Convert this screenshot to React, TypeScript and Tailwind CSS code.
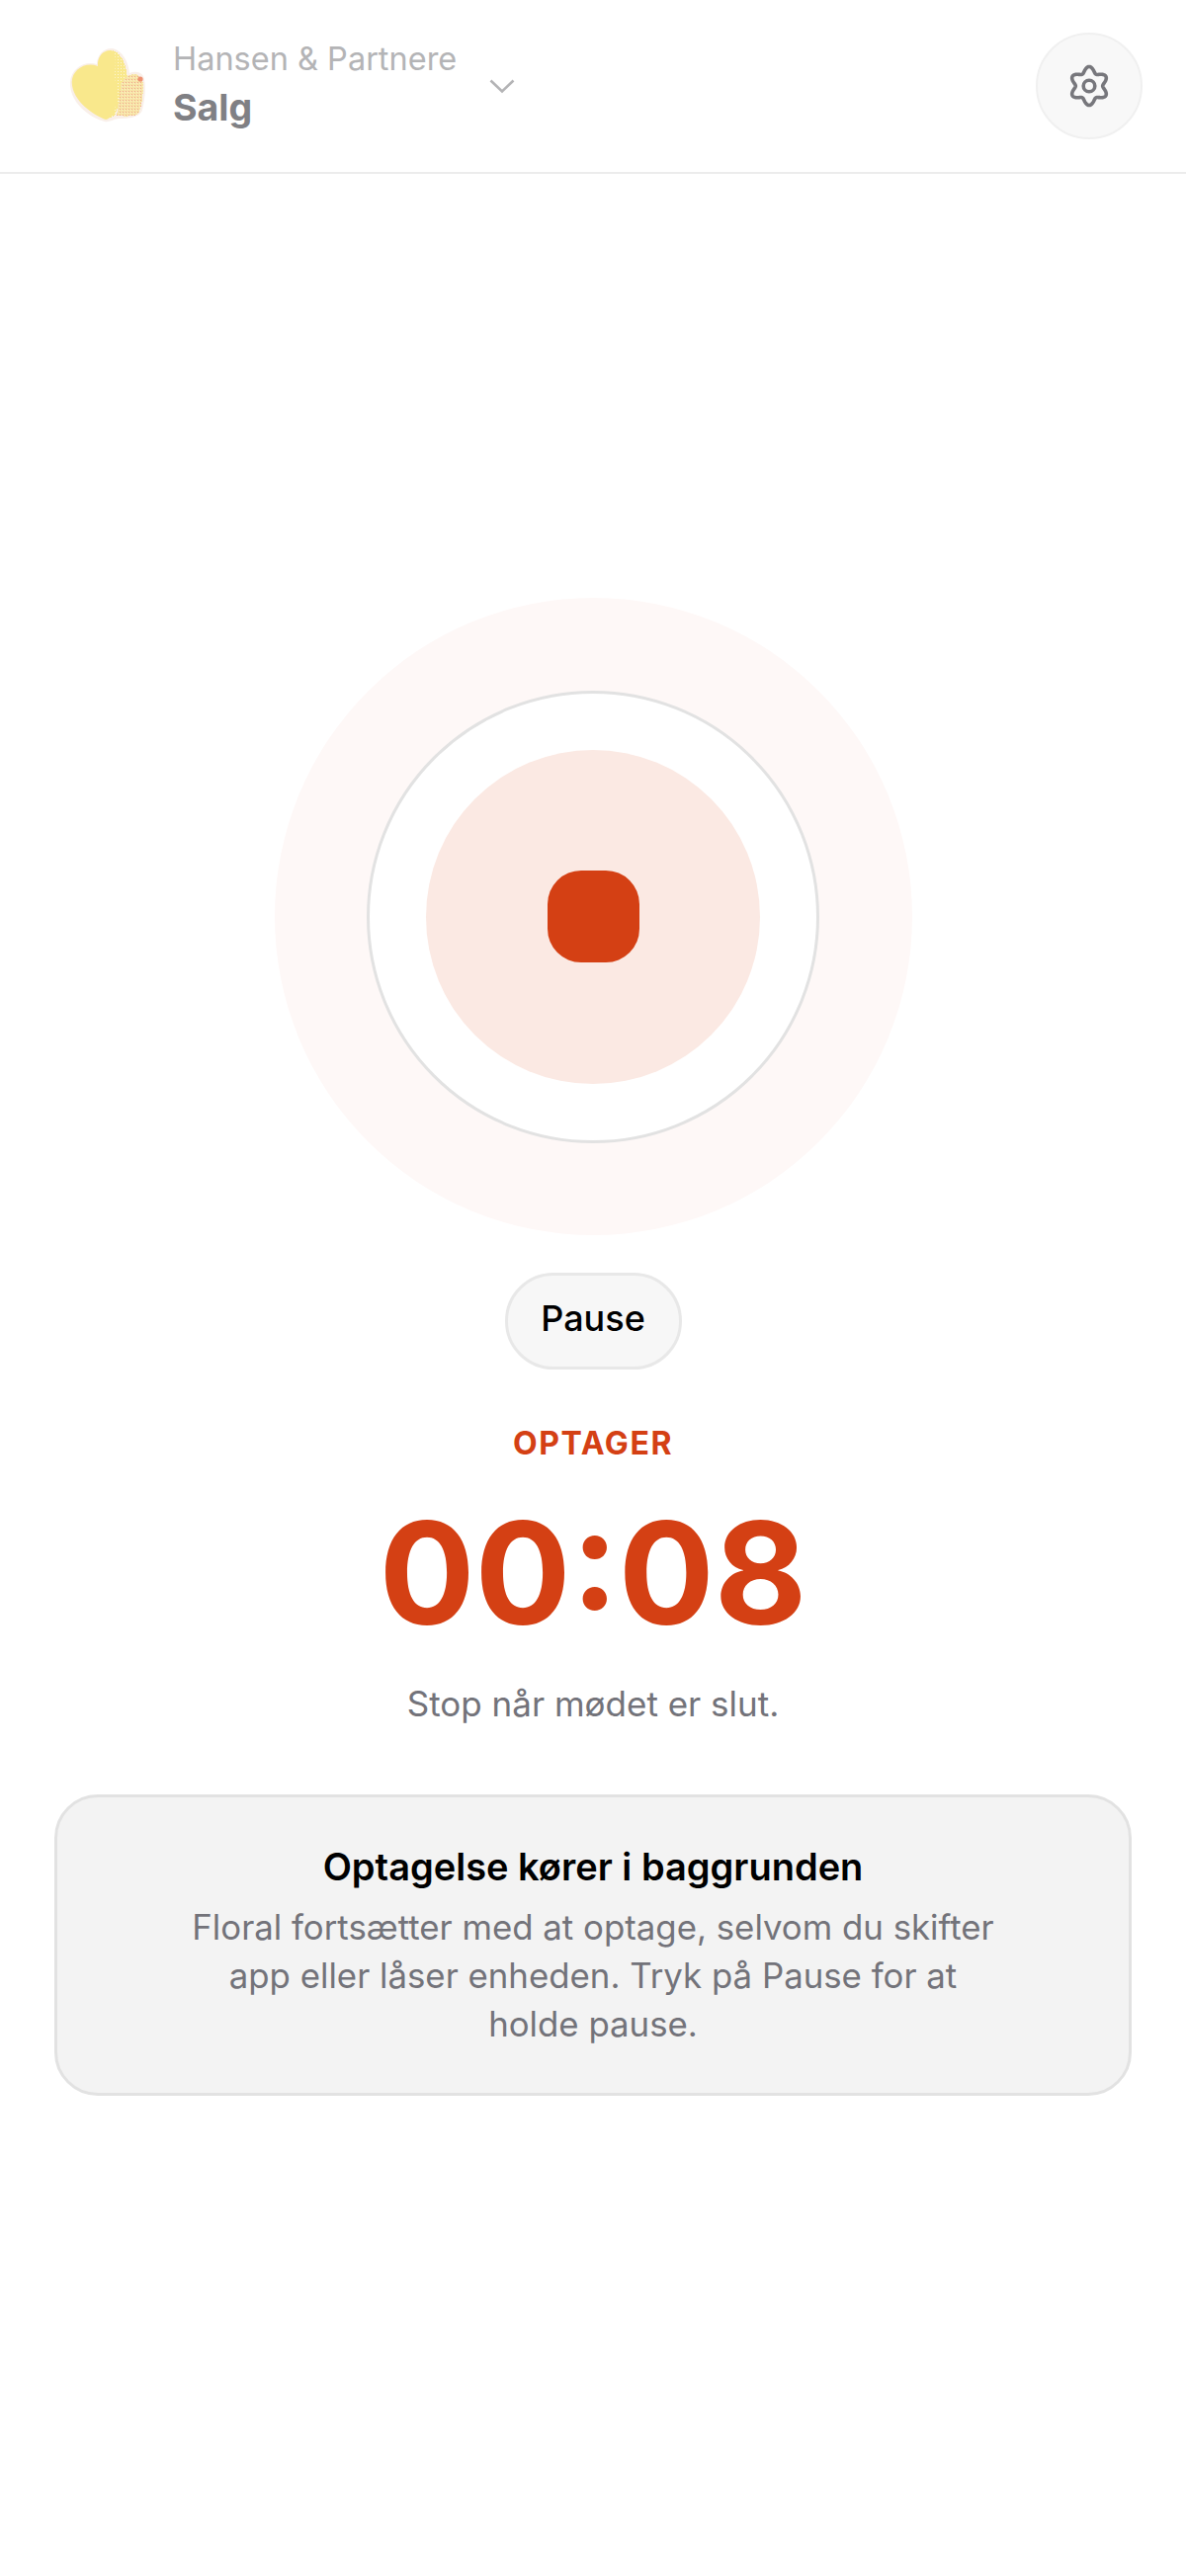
const font = { fontFamily: 'Inter, "Liberation Sans", sans-serif' };

// Six-lobed cog outline traced in polar form around its centre.
function cogPath(cx: number, cy: number) {
  const points: string[] = [];
  for (let i = 0; i < 180; i++) {
    const a = (i / 180) * Math.PI * 2;
    const r = 16.6 + 2.9 * Math.cos(6 * a);
    const x = cx + r * Math.sin(a);
    const y = cy - r * Math.cos(a);
    points.push(`${i === 0 ? "M" : "L"}${x.toFixed(2)} ${y.toFixed(2)}`);
  }
  return points.join(" ") + " Z";
}

function TeamLogo() {
  return (
    <svg width="80" height="80" viewBox="0 0 80 80" className="shrink-0" shapeRendering="crispEdges">
      <defs>
        <pattern id="petal" width="3" height="3" patternUnits="userSpaceOnUse">
          <rect width="3" height="3" fill="#f9e88c" />
          <rect width="1" height="1" x="1" y="1" fill="#fdf6d8" />
        </pattern>
        <pattern id="blush" width="3" height="3" patternUnits="userSpaceOnUse">
          <rect width="3" height="3" fill="#f7e3a6" />
          <rect width="1" height="1" x="0" y="0" fill="#f0a890" />
          <rect width="1" height="1" x="2" y="1" fill="#fbf0c4" />
        </pattern>
      </defs>
      <g shapeRendering="geometricPrecision">
        <path
          d="M36 76 C20 72 0 56 1 36 C2 22 16 14 28 18 C28 8 36 1 44 2 C54 4 60 16 61 27 C66 25 72 25 75 30 C78 38 77 52 74 64 C72 72 60 73 50 73 C44 74 40 77 36 76 Z"
          fill="#f9efe9"
        />
      </g>
      <path d="M48 70 C56 71 66 71 70 68 C74 60 75 46 75 37 C73 31 70 28 66 28 C60 28 55 32 52 36 C50 46 50 60 48 70 Z" fill="url(#blush)" />
      <path d="M44 4 C52 6 57 16 59 30 C56 32 53 35 52 38 C51 50 50 60 47 68 C44 72 42 72 40 72 L40 10 Z" fill="url(#petal)" />
      <circle cx="72" cy="33" r="2.6" fill="#ee9070" shapeRendering="geometricPrecision" />
      <g shapeRendering="geometricPrecision">
        <path
          d="M37 74 C26 70 3 56 2.7 36 C3 24 16 15 29 20 C28 10 35 3 43 4 C48 8 47 18 46 28 C47 40 50 50 46 64 C43 70 40 74 37 74 Z"
          fill="#f9e88c"
        />
      </g>
    </svg>
  );
}

function Header() {
  return (
    <header className="flex h-[176px] items-center justify-between border-b-2 border-[#ececec] pl-[70px] pr-[44px]">
      <div className="flex items-center">
        <TeamLogo />
        <div className="ml-[25px] flex flex-col">
          <span className="-mt-[4px] mb-[4px] text-[32.5px] leading-[44px] text-[#b4b4b6]">Hansen &amp; Partnere</span>
          <span className="text-[37.5px] font-bold leading-[46px] text-[#808084]">Salg</span>
        </div>
        <svg width="28" height="16" viewBox="0 0 28 16" className="ml-[32px]" fill="none">
          <path d="M2.5 2.5 L14 13.5 L25.5 2.5" stroke="#b4b4b6" strokeWidth="2.6" />
        </svg>
      </div>
      <button className="flex h-[108px] w-[108px] items-center justify-center rounded-full border-2 border-[#f0f0f0] bg-[#f8f8f8]">
        <svg width="48" height="48" viewBox="0 0 48 48" fill="none" stroke="#77777c" strokeWidth="3.6" strokeLinejoin="round">
          <path d={cogPath(24, 24)} />
          <circle cx="24" cy="24" r="5.8" />
        </svg>
      </button>
    </header>
  );
}

function RecordingDial() {
  return (
    <div className="flex h-[645px] w-[645px] items-center justify-center rounded-full bg-[#fef8f7]">
      <div className="flex h-[458px] w-[458px] items-center justify-center rounded-full border-[3px] border-[#e2e2e2] bg-white">
        <div className="flex h-[338px] w-[338px] items-center justify-center rounded-full bg-[#fbe9e3]">
          <div className="h-[93px] w-[93px] rounded-[34px] bg-[#d44014]" />
        </div>
      </div>
    </div>
  );
}

export default function App() {
  return (
    <div className="min-h-[2607px] w-[1200px] bg-white" style={font}>
      <Header />
      <main className="flex flex-col items-center pt-[429px]">
        <RecordingDial />
        <button className="mt-[38px] flex h-[98px] w-[179px] items-center justify-center rounded-full border-[3px] border-[#e8e8e8] bg-[#f7f7f7] pb-[6px] text-[36px] font-medium text-black">
          Pause
        </button>
        <div className="mt-[57px] text-[32px] font-bold leading-[36px] tracking-[1.6px] text-[#d44014]">OPTAGER</div>
        <div className="mt-[28px] text-[144px] font-bold leading-[170px] text-[#d44014]">00:08</div>
        <p className="mt-[25px] text-[35px] leading-[44px] text-[#73737a]">Stop når mødet er slut.</p>
        <section className="mt-[70px] flex h-[305px] w-[1090px] flex-col items-center rounded-[44px] border-[3px] border-[#e2e2e2] bg-[#f3f3f3] pt-[46px] text-center">
          <h2 className="text-[38px] font-semibold leading-[48px] text-black">Optagelse kører i baggrunden</h2>
          <p className="mt-[13px] w-[822px] text-[34.8px] leading-[49px] text-[#73737a]">
            Floral fortsætter med at optage, selvom du skifter app eller låser enheden. Tryk på Pause for at holde pause.
          </p>
        </section>
      </main>
    </div>
  );
}
